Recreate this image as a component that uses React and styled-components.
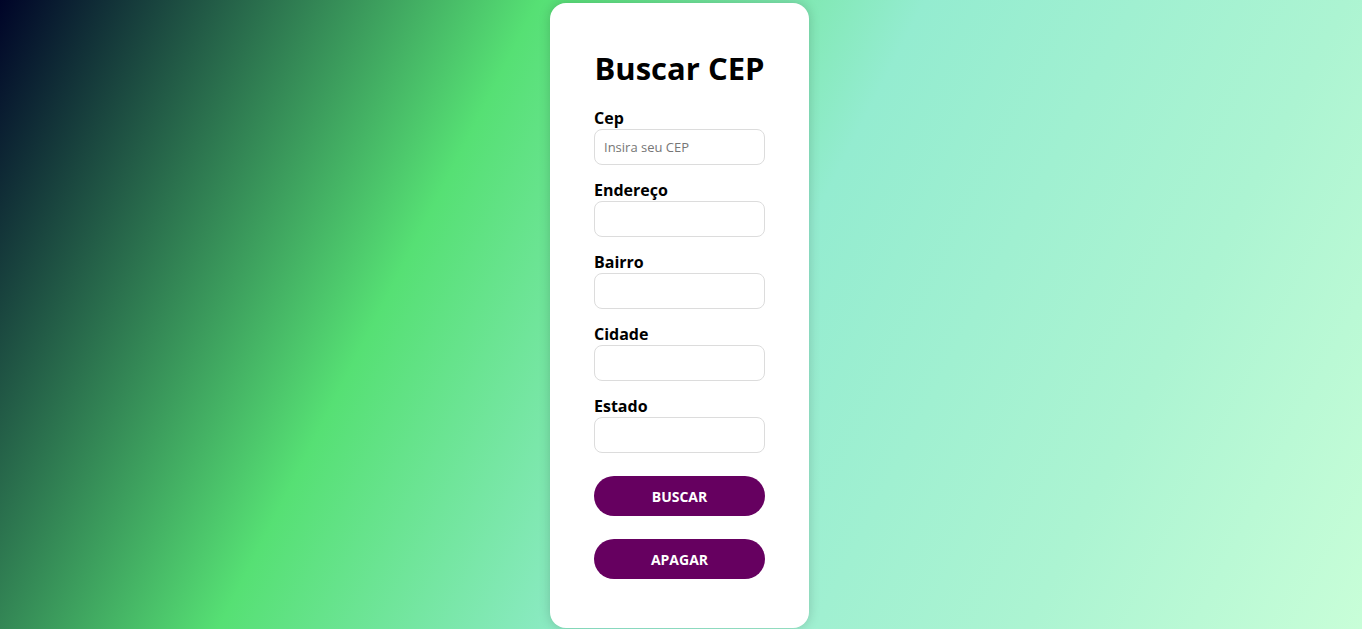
import React, { useState } from 'react';
import styled, { createGlobalStyle } from 'styled-components';

const GlobalStyle = createGlobalStyle`
  * { box-sizing: border-box; }
  html, body {
    margin: 0;
    padding: 0;
    min-height: 100vh;
  }
  body {
    font-family: "Open Sans", "Liberation Sans", sans-serif;
    background: linear-gradient(117deg, #000428 0%, #56e074 32%, #94ecd0 55%, #acf4d2 80%, #c8fed8 100%);
    background-attachment: fixed;
  }
`;

const Page = styled.main`
  min-height: 100vh;
  display: flex;
  justify-content: center;
  align-items: flex-start;
  padding: 3px 3px 0 0;
`;

const Card = styled.div`
  width: 259px;
  background: #fff;
  border-radius: 16px;
  padding: 44px 44px 49px;
  box-shadow: 0 0 12px rgba(0, 0, 0, 0.18);
  display: flex;
  flex-direction: column;
`;

const Title = styled.h1`
  margin: 0 0 17px;
  font-size: 31px;
  font-weight: 700;
  line-height: 43px;
  white-space: nowrap;
  color: #000;
  text-align: center;
`;

const Form = styled.form`
  display: flex;
  flex-direction: column;
  gap: 14px;
`;

const Field = styled.div`
  display: flex;
  flex-direction: column;
`;

const Label = styled.label`
  font-size: 16px;
  font-weight: 700;
  line-height: 22px;
  color: #000;
`;

const Input = styled.input`
  width: 100%;
  height: 36px;
  border: 1px solid #dcdcdc;
  border-radius: 8px;
  padding: 0 9px;
  font-family: inherit;
  font-size: 13px;
  color: #222;
  outline: none;

  &::placeholder {
    color: #767676;
  }
`;

const Button = styled.button`
  width: 100%;
  height: 40px;
  margin-top: ${(p) => p.$top}px;
  border: none;
  border-radius: 20px;
  background: #660060;
  color: #fff;
  font-family: inherit;
  font-size: 14px;
  font-weight: 700;
  text-transform: uppercase;
  cursor: pointer;
`;

const fields = [
  { id: 'cep', label: 'Cep', placeholder: 'Insira seu CEP' },
  { id: 'endereco', label: 'Endereço' },
  { id: 'bairro', label: 'Bairro' },
  { id: 'cidade', label: 'Cidade' },
  { id: 'estado', label: 'Estado' },
];

export default function App() {
  const [values, setValues] = useState({});

  const update = (id) => (e) => setValues({ ...values, [id]: e.target.value });

  return (
    <>
      <GlobalStyle />
      <Page>
        <Card>
          <Title>Buscar CEP</Title>
          <Form onSubmit={(e) => e.preventDefault()}>
            {fields.map((f) => (
              <Field key={f.id}>
                <Label htmlFor={f.id}>{f.label}</Label>
                <Input
                  id={f.id}
                  type="text"
                  placeholder={f.placeholder}
                  value={values[f.id] || ''}
                  onChange={update(f.id)}
                />
              </Field>
            ))}
          </Form>
          <Button type="button" $top={23}>Buscar</Button>
          <Button type="button" $top={23} onClick={() => setValues({})}>Apagar</Button>
        </Card>
      </Page>
    </>
  );
}
